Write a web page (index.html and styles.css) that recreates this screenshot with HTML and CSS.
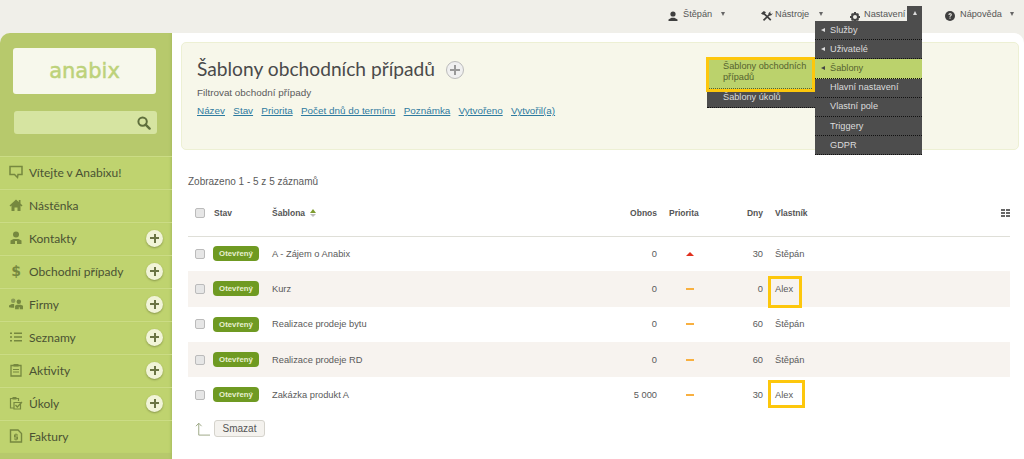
FILE: index.html
```html
<!DOCTYPE html>
<html lang="cs">
<head>
<meta charset="utf-8">
<title>Šablony obchodních případů</title>
<link rel="stylesheet" href="styles.css">
</head>
<body>
<header class="topbar">
  <div class="top-item w-user">
    <svg class="top-ico" viewBox="0 0 10 10"><circle cx="5" cy="3" r="2.6"/><path d="M0.5 10V8.6L3.6 6.8H6.4L9.5 8.6V10Z"/></svg>
    <span>Štěpán</span><i class="caret"></i>
  </div>
  <div class="top-item w-tools">
    <svg class="top-ico wide" viewBox="0 0 12 10"><path d="M2.5 9.4 9 3M2.2 1.8 9.8 9.2" fill="none" stroke="#3f3f3f" stroke-width="1.7"/><path d="M0 2.6 2.8 0 5 1.2 2.6 3.8 1.4 3.6ZM7.4 2.2 9.6.2 9.2 1.9 10.3 2.9 12 2.3 10 4.6 8 4.6Z"/></svg>
    <span>Nástroje</span><i class="caret"></i>
  </div>
  <div class="top-item w-settings">
    <svg class="top-ico gear" viewBox="0 0 10 10"><circle cx="5" cy="5" r="3" fill="none" stroke="#444" stroke-width="2"/><path d="M4 0H6V2H4ZM4 8H6V10H4ZM0 4H2V6H0ZM8 4H10V6H8ZM1 2.2 2.2 1 3.4 2.2 2.2 3.4ZM6.6 7.8 7.8 6.6 9 7.8 7.8 9ZM7.8 1 9 2.2 7.8 3.4 6.6 2.2ZM2.2 6.6 3.4 7.8 2.2 9 1 7.8Z"/></svg>
    <span>Nastavení</span>
    <span class="open-tab"><i class="caret up"></i></span>
    <div class="menu">
      <div class="menu-row"><i class="tri"></i>Služby</div>
      <div class="menu-row"><i class="tri"></i>Uživatelé</div>
      <div class="menu-row active"><i class="tri"></i>Šablony</div>
      <div class="menu-row"><i class="tri blank"></i>Hlavní nastavení</div>
      <div class="menu-row"><i class="tri blank"></i>Vlastní pole</div>
      <div class="menu-row"><i class="tri blank"></i>Triggery</div>
      <div class="menu-row"><i class="tri blank"></i>GDPR</div>
      <div class="submenu">
        <div class="sub-row active">Šablony obchodních případů</div>
        <div class="sub-row">Šablony úkolů</div>
      </div>
    </div>
  </div>
  <div class="top-item w-help">
    <svg class="top-ico" viewBox="0 0 10 10"><circle cx="5" cy="5" r="5"/><path d="M3.4 3.8C3.5 1.9 6.8 1.9 6.8 3.7 6.8 4.9 5.4 4.8 5.4 6H4.5C4.5 4.4 5.8 4.5 5.8 3.7 5.8 3 4.5 3 4.4 3.9ZM4.5 6.6H5.5V7.7H4.5Z" fill="#f0efe9"/></svg>
    <span>Nápověda</span><i class="caret"></i>
  </div>
</header>

<div class="shell">
  <aside class="sidebar">
    <div class="logo-box"><span class="logo">anabix</span></div>
    <div class="search">
      <svg class="search-ico" viewBox="0 0 14 14"><circle cx="5.6" cy="5.6" r="4.2" fill="none" stroke="#5f6f3d" stroke-width="2"/><path d="M8.6 8.6 12.6 12.6" stroke="#5f6f3d" stroke-width="2.4" stroke-linecap="round"/></svg>
    </div>
    <nav class="nav">
      <div class="nav-row"><svg class="nav-ico" viewBox="0 0 14 14"><path d="M1 1.5H13V9.5H9L8.5 12.5 5.5 9.5H1Z" fill="none" stroke="#76883f" stroke-width="1.5"/></svg><span>Vítejte v Anabixu!</span></div>
      <div class="nav-row"><svg class="nav-ico" viewBox="0 0 14 14"><path d="M7 1.5 0.5 7.5 1.5 8.5 2.5 7.6V13H5.5V9.5H8.5V13H11.5V7.6L12.5 8.5 13.5 7.5 11.5 5.6V2H9.8V4Z" fill="#76883f"/></svg><span>Nástěnka</span></div>
      <div class="nav-row"><svg class="nav-ico" viewBox="0 0 14 14"><circle cx="7" cy="3.5" r="3" fill="#76883f"/><path d="M1.5 13V9.5L4.5 8H9.5L12.5 9.5V13H8V10H6V13Z" fill="#76883f"/></svg><span>Kontakty</span><b class="plus"></b></div>
      <div class="nav-row"><span class="nav-ico dollar">$</span><span>Obchodní případy</span><b class="plus"></b></div>
      <div class="nav-row"><svg class="nav-ico" viewBox="0 0 15 14"><circle cx="4.5" cy="3.5" r="2.4" fill="#8b9c54"/><circle cx="10.5" cy="4.5" r="2.4" fill="#76883f"/><path d="M0 10.5V8.5L3 7H5.5V11H3ZM6.5 12.5V9L8.5 7.8H12.5L15 9V12.5H11.5V10.5H10.5V12.5Z" fill="#76883f"/></svg><span>Firmy</span><b class="plus"></b></div>
      <div class="nav-row"><svg class="nav-ico" viewBox="0 0 14 14"><path d="M1 2.5H3V4H1ZM1 6.2H3V7.8H1ZM1 10H3V11.6H1ZM5 2.5H13V4H5ZM5 6.2H13V7.8H5ZM5 10H13V11.6H5Z" fill="#76883f"/></svg><span>Seznamy</span><b class="plus"></b></div>
      <div class="nav-row"><svg class="nav-ico" viewBox="0 0 14 14"><path d="M2 2.5H12V13H2Z" fill="none" stroke="#76883f" stroke-width="1.3"/><path d="M4.5 1H9.5V3.5H4.5ZM4 6H10V7H4ZM4 8.5H10V9.5H4Z" fill="#76883f"/></svg><span>Aktivity</span><b class="plus"></b></div>
      <div class="nav-row"><svg class="nav-ico" viewBox="0 0 14 14"><path d="M9.5 5V2.5H1.5V12H4.5M5 6.5H11.5V13H5Z" fill="none" stroke="#76883f" stroke-width="1.2"/><path d="M3.5 1H7.5V3.5H3.5Z" fill="#76883f"/><path d="M6.5 9 8.3 11 13 6" fill="none" stroke="#76883f" stroke-width="1.3"/></svg><span>Úkoly</span><b class="plus"></b></div>
      <div class="nav-row"><svg class="nav-ico" viewBox="0 0 14 14"><path d="M1.5 1H9L12.5 4.5V13H1.5Z" fill="none" stroke="#76883f" stroke-width="1.4"/><path d="M6.5 4.5H7.5V5.5H9V6.5H6.5V7.5H9V10.5H7.5V11.5H6.5V10.5H5V9.5H7.5V8.5H5V5.5H6.5Z" fill="#76883f"/></svg><span>Faktury</span></div>
    </nav>
  </aside>

  <main class="content">
    <section class="panel">
      <div class="title-row"><h1>Šablony obchodních případů</h1><b class="plus grey"></b></div>
      <p class="filter-label">Filtrovat obchodní případy</p>
      <div class="filters"><a href="#">Název</a><a href="#">Stav</a><a href="#">Priorita</a><a href="#">Počet dnů do termínu</a><a href="#">Poznámka</a><a href="#">Vytvořeno</a><a href="#">Vytvořil(a)</a></div>
    </section>

    <p class="count">Zobrazeno 1 - 5 z 5 záznamů</p>

    <table class="grid">
      <thead>
        <tr>
          <th class="c-check"><i class="check"></i></th>
          <th class="c-state">Stav</th>
          <th class="c-name">Šablona <i class="sort"></i></th>
          <th class="c-num">Obnos</th>
          <th class="c-prio">Priorita</th>
          <th class="c-days">Dny</th>
          <th class="c-owner">Vlastník</th>
          <th class="c-cols"><svg class="cols-ico" viewBox="0 0 9 8"><path d="M0 0H4V2H0ZM5 0H9V2H5ZM0 3H4V5H0ZM5 3H9V5H5ZM0 6H4V8H0ZM5 6H9V8H5Z" fill="#666"/></svg></th>
        </tr>
      </thead>
      <tbody>
        <tr><td><i class="check"></i></td><td><span class="badge">Otevřený</span></td><td>A - Zájem o Anabix</td><td class="num">0</td><td class="prio"><i class="high"></i></td><td class="num">30</td><td class="owner">Štěpán</td><td></td></tr>
        <tr class="alt"><td><i class="check"></i></td><td><span class="badge">Otevřený</span></td><td>Kurz</td><td class="num">0</td><td class="prio"><i class="mid"></i></td><td class="num">0</td><td class="owner"><span class="mark m1">Alex</span></td><td></td></tr>
        <tr><td><i class="check"></i></td><td><span class="badge">Otevřený</span></td><td>Realizace prodeje bytu</td><td class="num">0</td><td class="prio"><i class="mid"></i></td><td class="num">60</td><td class="owner">Štěpán</td><td></td></tr>
        <tr class="alt"><td><i class="check"></i></td><td><span class="badge">Otevřený</span></td><td>Realizace prodeje RD</td><td class="num">0</td><td class="prio"><i class="mid"></i></td><td class="num">60</td><td class="owner">Štěpán</td><td></td></tr>
        <tr><td><i class="check"></i></td><td><span class="badge">Otevřený</span></td><td>Zakázka produkt A</td><td class="num">5 000</td><td class="prio"><i class="mid"></i></td><td class="num">30</td><td class="owner"><span class="mark m2">Alex</span></td><td></td></tr>
      </tbody>
    </table>

    <div class="actions">
      <svg class="back-arrow" viewBox="0 0 16 14"><path d="M4 13.5V1M1 4 4 .8 7 4M4 13.5H16" fill="none" stroke="#9aa582" stroke-width="1"/></svg>
      <button class="btn" type="button">Smazat</button>
    </div>
  </main>
</div>
</body>
</html>
```

FILE: styles.css
```css
* { box-sizing: border-box; }
html, body { height: 100%; }
body {
  margin: 0;
  height: 459px;
  overflow: hidden;
  background: #f0efe9;
  font-family: "Liberation Sans", Arial, sans-serif;
  font-size: 9.9px;
  color: #5a5a5a;
}

/* top bar */
.topbar {
  height: 33px;
  display: flex;
  padding-left: 668px;
  align-items: flex-start;
  padding-top: 9px;
  line-height: 11px;
  font-size: 9.2px;
  color: #555;
}
.top-item { display: flex; align-items: flex-start; position: relative; }
.w-user { width: 93px; }
.w-tools { width: 89px; }
.w-settings { width: 95px; }
.top-ico { width: 10px; height: 10px; fill: #3f3f3f; margin: 2px 5px 0 0; flex: none; }
.top-ico.wide { width: 12px; margin-right: 2px; }
.top-ico.gear { margin: 3px 4px 0 0; fill: #444; }
.caret {
  width: 0; height: 0;
  border-left: 2.5px solid transparent;
  border-right: 2.5px solid transparent;
  border-top: 4px solid #666;
  margin: 3px 0 0 8.5px;
}
.caret.up { border-top: 0; border-bottom: 4px solid #ddd; margin: 0; }
.w-tools .caret { margin-left: 9.5px; }
.open-tab {
  position: absolute;
  left: 57px;
  top: -3px;
  width: 15px;
  height: 16px;
  background: #4d4d4d;
  display: flex;
  justify-content: center;
  padding-top: 5px;
}
.menu {
  position: absolute;
  left: -35px;
  top: 12px;
  width: 107px;
  background: #4d4d4d;
  color: #dcdcdc;
  z-index: 5;
}
.menu-row {
  height: 19.2px;
  display: flex;
  align-items: center;
  padding-left: 6px;
  border-bottom: 1px dotted #111;
}
.menu-row.active, .sub-row.active { background: #bbd26c; color: #55622f; }
.tri {
  width: 0; height: 0;
  border-top: 2.5px solid transparent;
  border-bottom: 2.5px solid transparent;
  border-right: 4px solid #ddd;
  margin-right: 5px;
}
.active .tri { border-right-color: #444; }
.tri.blank { border-right-color: transparent; }
.submenu {
  position: absolute;
  left: -108px;
  top: 37px;
  width: 108px;
  background: #4d4d4d;
  border-bottom: 1px dotted #111;
}
.sub-row {
  padding: 0 0 4px 16px;
  line-height: 11px;
  height: 15px;
}
.sub-row.active {
  height: 35px;
  padding-top: 1px;
  margin: -1px 0 0 -1px;
  width: 109px;
  border: 3px solid #fdc70c;
  padding-left: 14px;
  position: relative;
}
.sub-row.active::after {
  content: "";
  position: absolute;
  left: 0;
  right: 0;
  bottom: 0;
  border-bottom: 1px dotted #55622f;
}

/* shell */
.shell { display: flex; height: 426px; }
.sidebar {
  width: 172px;
  flex: none;
  background: #b7c96c;
  border-top-left-radius: 10px;
  box-shadow: inset -3px 0 3px -2px #a8bb5f;
  padding-top: 15px;
}
.logo-box {
  margin: 0 16px 0 13px;
  height: 46px;
  border-radius: 3px;
  background: #f7f8ec;
  display: flex;
  align-items: center;
  justify-content: center;
}
.logo {
  font-family: "DejaVu Sans", sans-serif;
  font-size: 21px;
  -webkit-text-stroke: .5px #bdd27a;
  color: #bdd27a;
  line-height: 1;
}
.search {
  margin: 17px 15px 0 14px;
  height: 23px;
  border-radius: 3px;
  background: #d6e4a1;
  display: flex;
  align-items: center;
  justify-content: flex-end;
  padding-right: 6px;
}
.search-ico { width: 14px; height: 14px; }
.nav { margin-top: 22px; }
.nav-row {
  height: 33px;
  background: #bfd36f;
  border-top: 1px solid #cbdc85;
  display: flex;
  align-items: center;
  padding: 0 9px 2px;
  position: relative;
  font-family: Lato, sans-serif;
  font-size: 12px;
  color: #4a5233;
  box-shadow: inset -3px 0 3px -2px #a8bb5f;
}
.nav-ico { width: 14px; height: 14px; margin-right: 6px; flex: none; overflow: visible; }
.dollar {
  font-family: "DejaVu Sans", sans-serif;
  font-weight: 700;
  font-size: 14px;
  line-height: 14px;
  color: #76883f;
  text-align: center;
}
.plus {
  width: 17px;
  height: 17px;
  border-radius: 50%;
  background: #f1f4d8;
  box-shadow: 0 1px 2px rgba(70,80,30,.45);
  position: relative;
  margin-left: auto;
  flex: none;
}
.plus::before, .plus::after {
  content: "";
  position: absolute;
  background: #6a7444;
}
.plus::before { left: 4px; right: 4px; top: 7.5px; height: 2px; }
.plus::after { top: 4px; bottom: 4px; left: 7.5px; width: 2px; }

/* content */
.content {
  flex: 1;
  background: #fff;
  border-top-right-radius: 10px;
  padding: 9px 5px 0 9px;
  position: relative;
}
.panel {
  height: 108px;
  background: #f7f7ea;
  border: 1px solid #edf0d4;
  border-radius: 5px;
  padding: 12px 15px;
}
.title-row { display: flex; align-items: center; height: 26px; }
h1 {
  margin: 0;
  font-family: Lato, sans-serif;
  font-size: 19.2px;
  font-weight: 400;
  color: #4a4a4a;
}
.plus.grey {
  width: 18px;
  height: 18px;
  margin: 3px 0 0 11px;
  background: #f0f0f0;
  border: 1px solid #bbb;
  box-shadow: none;
}
.plus.grey::before { left: 3px; right: 3px; top: 7px; background: #999; }
.plus.grey::after { top: 3px; bottom: 3px; left: 7px; background: #999; }
.filter-label { margin: 6px 0 0; line-height: 12px; }
.filters { display: flex; gap: 8.3px; margin-top: 6px; line-height: 12px; }
.filters a { color: #2e7a9f; text-decoration: underline; }
.count { margin: 25px 0 0 7px; line-height: 13px; font-size: 10px; }

.grid {
  border-collapse: collapse;
  table-layout: fixed;
  width: 822px;
  margin: 8px 0 0 7px;
  font-size: 9.3px;
}
.grid th {
  height: 40px;
  padding: 0 0 6px;
  text-align: left;
  font-size: 8.5px;
  font-weight: 700;
  color: #555;
  border-bottom: 1px solid #dfdfd8;
}
.grid td { height: 35.3px; padding: 0; }
.grid tr.alt td { background: #f7f3ef; }
.c-check { width: 25px; }
.c-state { width: 59px; }
.c-name { width: 330px; }
.c-num { width: 55px; text-align: right !important; }
.c-prio { width: 58px; padding-left: 12px !important; }
.c-days { width: 48px; text-align: right !important; }
.c-owner { width: 237px; padding-left: 12px !important; }
.c-cols { width: 10px; }
th.c-state { padding-left: 1px !important; }
.num { text-align: right; }
.prio { text-align: left; padding-left: 29px !important; }
.owner { padding-left: 12px !important; position: relative; }
.check {
  display: block;
  width: 10px;
  height: 10px;
  margin-left: 7px;
  background: #e6e6e6;
  border: 1px solid #bbb;
  border-radius: 2px;
}
.badge {
  display: block;
  width: 46px;
  height: 15px;
  line-height: 15px;
  border-radius: 4px;
  background: #6f9a22;
  color: #e8f0d0;
  font-size: 7.8px;
  font-weight: 700;
  text-align: center;
}
.sort {
  display: inline-block;
  width: 0; height: 0;
  margin-left: 3px;
  vertical-align: 3px;
  border-left: 3px solid transparent;
  border-right: 3px solid transparent;
  border-bottom: 4px solid #7e9c2f;
  position: relative;
}
.sort::after {
  content: "";
  position: absolute;
  left: -3px;
  top: 5px;
  border-left: 3px solid transparent;
  border-right: 3px solid transparent;
  border-top: 3px solid #bbb;
}
.high {
  display: block;
  width: 0; height: 0;
  border-left: 4px solid transparent;
  border-right: 4px solid transparent;
  border-bottom: 4px solid #e0301e;
}
.mid { display: block; width: 8px; height: 2px; background: #f8b040; }
.mark { position: relative; }
.mark::after {
  content: "";
  position: absolute;
  border: 3px solid #fdc70c;
}
.m1::after { left: -7px; top: -8px; width: 28px; height: 26px; }
.m2::after { left: -7px; top: -10px; width: 31px; height: 22px; }
.cols-ico { width: 9px; height: 8px; display: block; margin-left: 1px; }

.actions { display: flex; align-items: center; margin: 0 0 0 14px; height: 33px; }
.back-arrow { width: 15px; height: 14px; margin-right: 4px; }
.btn {
  height: 17px;
  width: 51px;
  padding: 0;
  background: #f4f2ee;
  border: 1px solid #d5d3cc;
  border-radius: 3px;
  font: 10px "Liberation Sans", Arial, sans-serif;
  color: #555;
}
```
